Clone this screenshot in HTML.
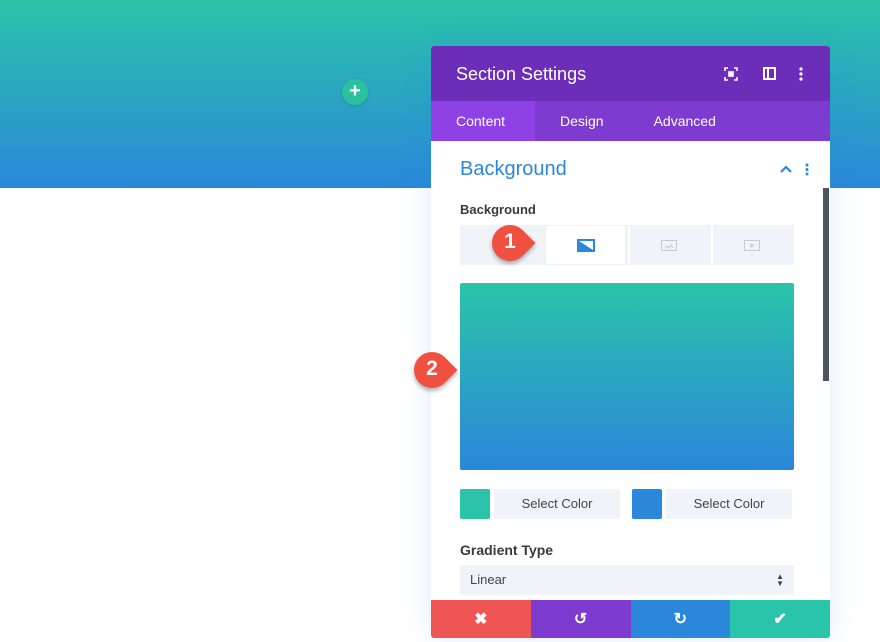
<!DOCTYPE html>
<html><head><style>
*{margin:0;padding:0;box-sizing:border-box}
body{width:880px;height:642px;background:#fff;position:relative;overflow:hidden;font-family:"Liberation Sans",sans-serif}
.top{position:absolute;left:0;top:0;width:880px;height:188px;background:linear-gradient(#2bc4a9,#2b87da)}
.plus{position:absolute;left:342px;top:79px;width:26px;height:26px;border-radius:50%;background:#2bc19f;color:#fff;font-size:20px;line-height:25px;text-align:center;font-weight:bold;box-shadow:0 1px 3px rgba(0,0,0,.15)}
.panel{position:absolute;left:431px;top:46px;width:399px;height:592px;background:#fff;box-shadow:0 0 30px rgba(43,135,218,.15);border-radius:3px;overflow:hidden}
.hd{height:55px;background:#6c2eb9;color:#fff;font-size:18px;padding:18px 25px;position:relative}
.tabs{height:40px;background:#7e3bd0;display:flex;color:#fff;font-size:14px}
.tabs div{padding:12px 25px}
.tabs .a{background:#8e42e6;width:104px}
.t{position:absolute;font-size:13px;color:#333;font-weight:bold;color:#3a3a3a}
.gray{background:#f0f3f8}
.foot{position:absolute;left:0;top:554px;width:399px;height:38px;display:flex}
.foot div{flex:1;color:#fff;display:flex;align-items:center;justify-content:center;font-size:16px;font-weight:bold}
.pin{position:absolute;width:36px;height:36px;background:#ef5040;border-radius:50% 0 50% 50%;transform:rotate(45deg);box-shadow:2px 2px 4px rgba(0,0,0,.3)}
.pinn{position:absolute;color:#fff;font-size:21px;font-weight:bold;width:36px;text-align:center}
</style></head><body>
<div class="top"></div>
<div class="plus">+</div>
<div class="panel">
 <div class="hd">Section Settings
  <svg style="position:absolute;left:293px;top:21px" width="14" height="14" viewBox="0 0 14 14" fill="none" stroke="#fff" stroke-width="1.6"><path d="M1 4V1h3M10 1h3v3M13 10v3h-3M4 13H1v-3"/><rect x="5" y="5" width="4" height="4" fill="#fff"/></svg>
  <svg style="position:absolute;left:332px;top:21px" width="13" height="13" viewBox="0 0 13 13"><rect x="1" y="1" width="11" height="11" fill="none" stroke="#fff" stroke-width="2"/><rect x="4" y="1" width="2" height="11" fill="#fff"/></svg>
  <svg style="position:absolute;left:368px;top:21px" width="4" height="14"><circle cx="2" cy="2" r="1.6" fill="#fff"/><circle cx="2" cy="7" r="1.6" fill="#fff"/><circle cx="2" cy="12" r="1.6" fill="#fff"/></svg>
 </div>
 <div class="tabs"><div class="a">Content</div><div>Design</div><div>Advanced</div></div>
 <div style="position:absolute;left:29px;top:112px;font-size:20px;color:#2b87da">Background</div>
 <svg style="position:absolute;left:349px;top:119px" width="12" height="8"><path d="M1 7l5-5 5 5" fill="none" stroke="#2b87da" stroke-width="2.2"/></svg>
 <svg style="position:absolute;left:374px;top:117px" width="4" height="13"><circle cx="2" cy="2" r="1.5" fill="#2b87da"/><circle cx="2" cy="6.5" r="1.5" fill="#2b87da"/><circle cx="2" cy="11" r="1.5" fill="#2b87da"/></svg>
 <div class="t" style="left:29px;top:156px">Background</div>
 <div class="gray" style="position:absolute;left:29px;top:179px;width:334px;height:40px"></div>
 <div style="position:absolute;left:114px;top:179px;width:81px;height:40px;background:#fff;border:1px solid #eef1f5"></div>
 <div style="position:absolute;left:280px;top:180px;width:2px;height:38px;background:#fff"></div>
 <div style="position:absolute;left:197px;top:180px;width:2px;height:38px;background:#fff"></div>
 <svg style="position:absolute;left:146px;top:193px" width="18" height="13"><rect width="18" height="13" fill="#2b87da"/><path d="M2 2h14L16 11z" fill="#fff"/></svg>
 <svg style="position:absolute;left:230px;top:194px" width="16" height="11"><rect x=".5" y=".5" width="15" height="10" fill="none" stroke="#c5ccd6"/><path d="M4 8l2-2 2 2 2-3 2 3" stroke="#c5ccd6" fill="none"/></svg>
 <svg style="position:absolute;left:313px;top:194px" width="16" height="11"><rect x=".5" y=".5" width="15" height="10" fill="none" stroke="#c5ccd6"/><path d="M6.5 3v5l4-2.5z" fill="#c5ccd6"/></svg>
 <div style="position:absolute;left:29px;top:237px;width:334px;height:187px;background:linear-gradient(#2bc4a9,#2b87da);border-radius:2px"></div>
 <div style="position:absolute;left:29px;top:443px;width:30px;height:30px;background:#2bc4a9;border-radius:2px"></div>
 <div class="gray" style="position:absolute;left:63px;top:443px;width:126px;height:30px;font-size:13px;color:#444;text-align:center;line-height:30px">Select Color</div>
 <div style="position:absolute;left:201px;top:443px;width:30px;height:30px;background:#2b87da;border-radius:2px"></div>
 <div class="gray" style="position:absolute;left:235px;top:443px;width:126px;height:30px;font-size:13px;color:#444;text-align:center;line-height:30px">Select Color</div>
 <div class="t" style="left:29px;top:496px;font-size:14px">Gradient Type</div>
 <div class="gray" style="position:absolute;left:29px;top:519px;width:334px;height:30px;font-size:13px;color:#444;line-height:30px;padding-left:10px">Linear<span style="position:absolute;right:10px;font-size:8px;line-height:7px;top:8px">▲<br>▼</span></div>
 <div style="position:absolute;left:392px;top:142px;width:6px;height:193px;background:#4b5563"></div>
 <div class="foot"><div style="background:#ef5555">✖</div><div style="background:#7e3bd0">↺</div><div style="background:#2b87da">↻</div><div style="background:#29c4a9">✔</div></div>
</div>
<div class="pin" style="left:492px;top:225px"></div><div class="pinn" style="left:492px;top:230px">1</div>
<div class="pin" style="left:414px;top:352px"></div><div class="pinn" style="left:414px;top:357px">2</div>
</body></html>
